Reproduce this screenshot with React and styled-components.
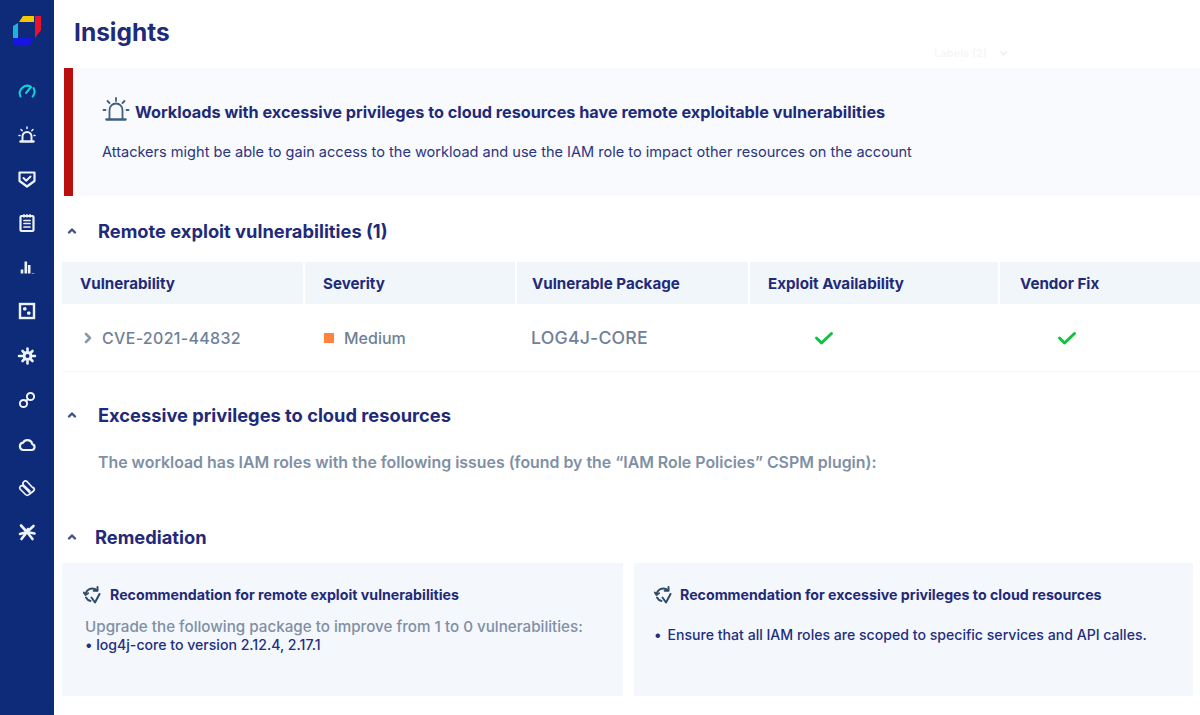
import React from "react";
import styled, { createGlobalStyle } from "styled-components";

const Global = createGlobalStyle`
  html, body { margin: 0; padding: 0; background: #fff; }
  body { font-family: Inter, "Liberation Sans", sans-serif; overflow: hidden; }
`;
const Page = styled.div`display: flex; width: 1200px; height: 715px; overflow: hidden; background: #fff;`;
const Sidebar = styled.nav`
  width: 54px; flex: none; background: #0d2b78; display: flex; flex-direction: column; align-items: center;
  padding-top: 15px; box-sizing: border-box;
`;
const Logo = styled.svg`width: 30px; height: 30px; margin-left: -1px; margin-bottom: 36px; display: block;`;
const NavList = styled.div`display: flex; flex-direction: column; align-items: center; gap: 24.1px;`;
const NavIcon = styled.svg`
  width: 20px; height: 20px; display: block; fill: none; stroke: ${p => p.$active ? "#10d4dc" : "#eef2fa"};
  stroke-width: 2; stroke-linecap: round; stroke-linejoin: round; margin-left: -1px;
`;
const Main = styled.main`flex: 1; min-width: 0; display: flex; flex-direction: column; padding-left: 8px;`;
const TitleRow = styled.header`display: flex; justify-content: space-between; height: 68px; box-sizing: border-box; padding: 18px 0 0 12px;`;
const Title = styled.h1`margin: 0; font-size: 24.5px; line-height: 29px; font-weight: 700; color: #1f2a78;`;
const FaintLabel = styled.span`
  display: flex; align-items: center; gap: 12px; height: 16px; margin: 27px 192px 0 0; font-size: 11px; line-height: 16px;
  font-weight: 600; color: #f5f5f6; filter: blur(0.6px);
`;
const FaintChevron = styled.svg`width: 9px; height: 6px; fill: none; stroke: #f3f3f4; stroke-width: 2;`;
const Banner = styled.section`
  margin-left: 2px; height: 128px; box-sizing: border-box; background: #f8fafd; border-left: 9px solid #b80f0f;
  padding: 29px 0 0 29px;
`;
const BannerTitle = styled.div`display: flex; align-items: center; gap: 5px; height: 30px;`;
const BannerHeading = styled.h2`margin: 0; font-size: 16.24px; line-height: 20px; font-weight: 700; color: #1f2a78;`;
const BannerText = styled.p`margin: 15px 0 0; font-size: 14.55px; line-height: 20px; font-weight: 400; color: #2b3580;`;
const AlarmIcon = styled.svg`width: 28px; height: 28px; margin-top: -4px; fill: none; stroke: #3f5f7f; stroke-width: 1.8; stroke-linecap: round; display: block;`;
const SectionHead = styled.div`
  display: flex; align-items: center; height: 24px; margin-top: ${p => p.$top}px; padding-left: 4px;
`;
const Chevron = styled.svg`width: 12px; height: 12px; flex: none; fill: none; stroke: #3f4f8a; stroke-width: 2.4; stroke-linecap: round; stroke-linejoin: round; margin-top: -1px;`;
const SectionTitle = styled.h3`margin: 0 0 0 ${p => p.$gap}px; font-size: 18.3px; line-height: 24px; font-weight: 700; color: #1f2a78;`;
const Table = styled.div`margin-top: 19px;`;
const Row = styled.div`
  display: grid; grid-template-columns: 241px 210px 231px 248px 1fr; column-gap: 2px;
  height: ${p => p.$head ? 42 : 68}px; ${p => !p.$head && "border-bottom: 1px solid #f6f7f9; box-sizing: border-box;"}
`;
const Th = styled.div`
  background: #f1f6fb; display: flex; align-items: center; padding-left: ${p => p.$pad}px; font-size: 15.15px;
  font-weight: 700; color: #1f2a78; padding-top: 1px;
`;
const Td = styled.div`
  display: flex; align-items: center; justify-content: ${p => p.$center ? "center" : "flex-start"};
  padding-left: ${p => p.$pad || 0}px; padding-right: ${p => p.$right || 0}px; font-size: ${p => p.$size || 16}px;
  font-weight: 500; color: #6f8098; letter-spacing: ${p => p.$track || 0}px;
`;
const RowArrow = styled.svg`width: 12px; height: 14px; margin-right: 8px; fill: none; stroke: #8e99a8; stroke-width: 2.6; stroke-linecap: round; stroke-linejoin: round;`;
const SeverityDot = styled.span`width: 10px; height: 10px; background: #ff833a; margin-right: 10px;`;
const Check = styled.svg`width: 20px; height: 16px; fill: none; stroke: #10c040; stroke-width: 3; stroke-linecap: round; stroke-linejoin: round;`;
const Note = styled.p`margin: 26px 0 0 36px; font-size: 15.9px; line-height: 20px; font-weight: 600; color: #7f8fa5;`;
const Cards = styled.div`display: grid; grid-template-columns: 561px 559px; column-gap: 11px; margin-top: 14px;`;
const Card = styled.article`height: 133px; background: #f4f7fc; box-sizing: border-box; padding: 21px 0 0 ${p => p.$pad}px;`;
const CardHead = styled.div`display: flex; align-items: center; gap: ${p => p.$gap}px; height: 22px;`;
const CardTitle = styled.h4`margin: 0; font-size: 14.2px; line-height: 20px; font-weight: 700; color: #1f2a78;`;
const SyncIcon = styled.svg`width: 18px; height: 20px; flex: none; fill: none; stroke: #2f4d68; stroke-width: 2; stroke-linecap: round; stroke-linejoin: round;`;
const CardBody = styled.div`margin: 11px 0 0 2px; font-size: 15.2px; line-height: 19px; font-weight: 500; color: #7f8fa5;`;
const CardLine = styled.div`font-size: 14.1px; line-height: 18px; font-weight: 500; color: #1c2f80;`;
const BulletLine = styled.div`display: flex; margin-top: 19px; font-size: 14.1px; line-height: 20px; font-weight: 500; color: #1c2f80; gap: 6px;`;

const Up = () => <Chevron viewBox="0 0 12 12"><path d="M3 7.5 6 4.5 9 7.5" /></Chevron>;
const Sync = () => (
  <SyncIcon viewBox="0 0 18 20">
    <path d="M2.500 8.500C4 4.500 8 2.500 12 4l2 1.500" />
    <path d="M14.500 2v3.800h-3.800" />
    <path d="M.8 7.500 2.500 10 5 8.200" />
    <path d="M3 12.500c1 1.800 2.500 3 4.500 3.400" />
    <path d="M8.500 12.500l3.500 5 4.500-8.500" />
  </SyncIcon>
);
const Ok = () => <Check viewBox="0 0 20 16"><path d="M2.500 8l5 5L17.500 3.500" /></Check>;

const nav = [
  <><path d="M3.500 15.500a7.500 7.500 0 0 1 10-10" /><path d="M16.500 7a7.500 7.500 0 0 1-.8 8.500" /><path d="M9 12l5-6" /></>,
  <><path d="M5.500 16v-4.500a4.500 4.500 0 0 1 9 0V16" /><path d="M3.500 16.500h13" strokeWidth="2.400" /><path d="M10 2v1.500M4 4.500l1.200 1.200M16 4.500l-1.200 1.200M2 10.500h1M17 10.500h1" strokeWidth="1.500" /></>,
  <><path d="M2.500 3.500h15v8.500L10 17.500 2.500 12z" strokeWidth="2.200" /><path d="M6.500 9l2.700 2.700L13.500 7.500" /></>,
  <><rect x="3.500" y="3" width="13" height="15" rx="1" strokeWidth="2.200" /><path d="M7 7.500h6M7 10.500h6M7 14h6M7 1.800v2M10 1.800v2M13 1.800v2" strokeWidth="1.700" /></>,
  <><path d="M5 16.500v-4M8.800 16.500V4.500M12.200 16.500V8M16 16.500v-.5" strokeWidth="2.600" strokeLinecap="butt" /></>,
  <><rect x="3" y="3" width="14" height="14" strokeWidth="2.400" strokeLinejoin="miter" /><path d="M7 6.800h2v2.200H7zM11 11h2v2.200h-2z" fill="#eef2fa" strokeWidth="1" /></>,
  <><circle cx="10.500" cy="10" r="3.500" strokeWidth="3" /><path d="M10.500 2.500v2M10.500 15.500v2M2 10h3M16 10h2M5.500 5l1.500 1.500M15.500 5 14 6.500M5.500 15 7 13.500M15.500 15 14 13.500" strokeWidth="2.600" /></>,
  <><circle cx="6.500" cy="13.500" r="3.600" /><circle cx="13.500" cy="6.500" r="3.600" /><path d="M9 11l2-2" /></>,
  <><path d="M6 16h8.500a3 3 0 0 0 .8-5.900A5 5 0 0 0 6 8.700 3.700 3.700 0 0 0 6 16z" strokeWidth="2.200" /></>,
  <g transform="matrix(-1 0 0 1 20 0)"><path d="M4.500 9.500 10 3.500a2.500 2.500 0 0 1 3.500 3.500l-6.500 6M7 15l7-7a2.200 2.200 0 0 1 3 3l-5.500 5.500a2.500 2.500 0 0 1-3.500 0L3.500 13a2.500 2.500 0 0 1 0-3.500" strokeWidth="1.700" /></g>,
  <><path d="M10 10 4 3.500M10 10l6.500-6M10 10l1-3M10 10l-7 2M10 10l7.500 1.500M10 10l-5.500 7M10 10l5.500 7" strokeWidth="2.600" /></>,
];

export default function App() {
  return (
    <Page>
      <Global />
      <Sidebar>
        <Logo viewBox="0 0 30 30">
          <path d="M7 7 11 1h11v6z" fill="#f7c600" />
          <path d="M23 1h6v14l-6 8z" fill="#e8132d" />
          <path d="M1 11l5-3v15H1z" fill="#19b5d8" />
          <path d="M1 23h21l-5 7H1z" fill="#1616e0" />
        </Logo>
        <NavList>
          {nav.map((n, i) => <NavIcon key={i} viewBox="0 0 20 20" $active={i === 0}>{n}</NavIcon>)}
        </NavList>
      </Sidebar>
      <Main>
        <TitleRow>
          <Title>Insights</Title>
          <FaintLabel>Labels (2)<FaintChevron viewBox="0 0 9 6"><path d="M1 1l3.500 3.500L8 1" /></FaintChevron></FaintLabel>
        </TitleRow>
        <Banner>
          <BannerTitle>
            <AlarmIcon viewBox="0 0 28 28">
              <path d="M7.500 23V14a6.500 6.500 0 0 1 13 0v9" />
              <path d="M4.500 23.500h19" strokeWidth="2.400" />
              <path d="M14 2v3M5.500 5l2 2M22.500 5l-2 2M1.500 14h2M24.500 14h2" />
            </AlarmIcon>
            <BannerHeading>Workloads with excessive privileges to cloud resources have remote exploitable vulnerabilities</BannerHeading>
          </BannerTitle>
          <BannerText>Attackers might be able to gain access to the workload and use the IAM role to impact other resources on the account</BannerText>
        </Banner>
        <SectionHead $top={23}><Up /><SectionTitle $gap={20}>Remote exploit vulnerabilities (1)</SectionTitle></SectionHead>
        <Table>
          <Row $head>
            <Th $pad={18}>Vulnerability</Th>
            <Th $pad={18}>Severity</Th>
            <Th $pad={15}>Vulnerable Package</Th>
            <Th $pad={18}>Exploit Availability</Th>
            <Th $pad={20}>Vendor Fix</Th>
          </Row>
          <Row>
            <Td $pad={20} $track={0.3}>
              <RowArrow viewBox="0 0 12 14"><path d="M4 3l4 4-4 4" /></RowArrow>CVE-2021-44832
            </Td>
            <Td $pad={19}><SeverityDot />Medium</Td>
            <Td $pad={14} $size={17.7} $track={0.2}>LOG4J-CORE</Td>
            <Td $center $right={100}><Ok /></Td>
            <Td $center $right={66}><Ok /></Td>
          </Row>
        </Table>
        <SectionHead $top={31}><Up /><SectionTitle $gap={20}>Excessive privileges to cloud resources</SectionTitle></SectionHead>
        <Note>The workload has IAM roles with the following issues (found by the “IAM Role Policies” CSPM plugin):</Note>
        <SectionHead $top={52}><Up /><SectionTitle $gap={17}>Remediation</SectionTitle></SectionHead>
        <Cards>
          <Card $pad={21}>
            <CardHead $gap={9}><Sync /><CardTitle>Recommendation for remote exploit vulnerabilities</CardTitle></CardHead>
            <CardBody>
              Upgrade the following package to improve from 1 to 0 vulnerabilities:
              <CardLine>• log4j-core to version 2.12.4, 2.17.1</CardLine>
            </CardBody>
          </Card>
          <Card $pad={20}>
            <CardHead $gap={8}><Sync /><CardTitle>Recommendation for excessive privileges to cloud resources</CardTitle></CardHead>
            <BulletLine><span>•</span><span>Ensure that all IAM roles are scoped to specific services and API calles.</span></BulletLine>
          </Card>
        </Cards>
      </Main>
    </Page>
  );
}
